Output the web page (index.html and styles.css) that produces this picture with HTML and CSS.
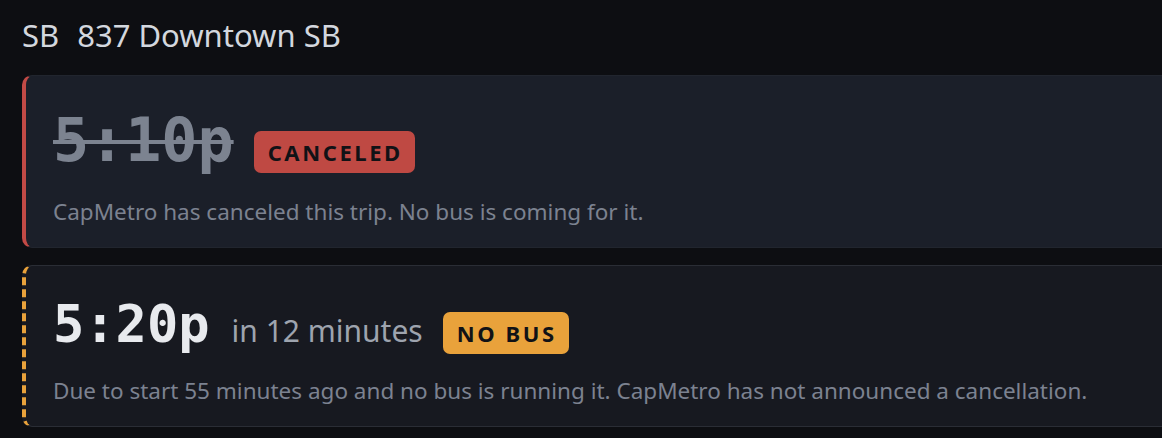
FILE: index.html
```html
<!DOCTYPE html>
<html lang="en">

<head>
    <meta charset="UTF-8">
    <meta name="viewport" content="width=device-width, initial-scale=1.0">
    <title>837 Downtown SB</title>
    <link rel="stylesheet" href="styles.css">
</head>

<body>
    <section class="stop">
        <h2 class="route"><span class="dir">SB</span>837 Downtown SB</h2>

        <ul class="trips">
            <li class="trip canceled">
                <div class="trip_head">
                    <span class="time">5:10p</span>
                    <span class="badge">CANCELED</span>
                </div>
                <p class="note">CapMetro has canceled this trip. No bus is coming for it.</p>
            </li>
            <li class="trip nobus">
                <div class="trip_head">
                    <span class="time">5:20p</span>
                    <span class="eta">in 12 minutes</span>
                    <span class="badge">NO BUS</span>
                </div>
                <p class="note">Due to start 55 minutes ago and no bus is running it. CapMetro has not announced a cancellation.</p>
            </li>
        </ul><!-- .trips end -->
    </section><!-- .stop end -->
</body>

</html>
```

FILE: styles.css
```css
* {
    margin: 0;
    padding: 0;
    box-sizing: border-box;
}

li {
    list-style: none;
}

body {
    background-color: #0d0e12;
    font-family: "Noto Sans", "Liberation Sans", sans-serif;
    overflow: hidden;
}

.stop {
    padding: 15px 0 0 22px;
}

.stop .route {
    font-size: 31px;
    font-weight: 400;
    color: #d3d7de;
    line-height: 40px;
}

.stop .route .dir {
    margin-right: 18px;
}

.trips {
    margin-top: 20px;
    margin-right: -40px;
    display: flex;
    flex-direction: column;
    gap: 17px;
}

.trip {
    border: 1px solid #21252e;
    border-left: 4px solid #c24a46;
    border-radius: 10px;
    background-color: #1b1f29;
    padding: 28px 28px 20px 27px;
}

.trip.nobus {
    background-color: #171920;
    border-color: #2a2d35;
    border-left: 4px dashed #e9a23b;
    padding-top: 27px;
}

.trip_head {
    display: flex;
    align-items: baseline;
    gap: 20px;
}

.trip .time {
    font-family: "DejaVu Sans Mono", "Liberation Mono", monospace;
    font-weight: 700;
    font-size: 52px;
    line-height: 1.2;
    color: #e8eaee;
}

.trip.canceled .time {
    font-size: 60px;
    color: #7c8390;
    text-decoration: line-through;
    text-decoration-thickness: 4px;
}

.trip .eta {
    font-size: 30px;
    color: #9ea4ae;
    margin-left: 2px;
}

.trip .badge {
    font-size: 22px;
    font-weight: 700;
    letter-spacing: 2.6px;
    color: #111216;
    line-height: 42px;
    padding: 0 12px 0 14px;
    border-radius: 7px;
    background-color: #bf4943;
}

.trip.nobus .badge {
    background-color: #e9a23b;
}

.trip .note {
    margin-top: 20px;
    font-size: 22.5px;
    color: #7c8290;
}
```
